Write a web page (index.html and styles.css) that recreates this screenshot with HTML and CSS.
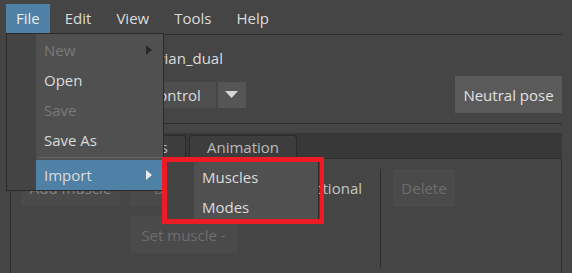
FILE: index.html
```html
<!DOCTYPE html>
<html lang="en">
<head>
    <meta charset="UTF-8">
    <title>Muscle rig editor</title>
    <link rel="stylesheet" href="styles.css">
</head>
<body>

    <nav class="menubar">
        <span class="menubar-item active">File</span>
        <span class="menubar-item">Edit</span>
        <span class="menubar-item">View</span>
        <span class="menubar-item">Tools</span>
        <span class="menubar-item">Help</span>
    </nav>

    <main class="window">
        <section class="model-bar">
            <div class="model-name">Model: avian_dual</div>
            <div class="model-controls">
                <div class="combo">
                    <span class="combo-value">Muscle control</span>
                    <span class="combo-arrow">
                        <svg width="13" height="7" viewBox="0 0 13 7"><polygon points="0,0 13,0 6.5,7" fill="#d6d6d6"/></svg>
                    </span>
                </div>
                <button class="btn btn-pose">Neutral pose</button>
            </div>
        </section>

        <section class="tabs">
            <div class="tab-bar">
                <span class="tab selected">Pose</span>
                <span class="tab">Muscles</span>
                <span class="tab">Animation</span>
            </div>
            <div class="tab-panel">
                <div class="muscle-grid">
                    <button class="btn btn-add">Add muscle</button>
                    <button class="btn" disabled>Deselect</button>
                    <span class="check-label">Bidirectional</span>
                    <button class="btn btn-set" disabled>Set muscle -</button>
                </div>
                <div class="vsep"></div>
                <button class="btn btn-delete" disabled>Delete</button>
            </div>
        </section>
    </main>

    <div class="popup file-menu">
        <div class="menu-item disabled">New <span class="arrow dim"></span></div>
        <div class="menu-item">Open</div>
        <div class="menu-item disabled">Save</div>
        <div class="menu-item">Save As</div>
        <div class="menu-sep"></div>
        <div class="menu-item active">Import <span class="arrow"></span></div>
    </div>

    <div class="popup import-menu">
        <div class="menu-item">Muscles</div>
        <div class="menu-item">Modes</div>
    </div>

    <div class="callout"></div>

</body>
</html>
```

FILE: styles.css
```css
:root {
    --bg: #454545;
    --menu-bg: #505050;
    --menu-gutter: #444444;
    --accent: #4f80a5;
    --text: #dcdcdc;
    --text-dim: #7a7a7a;
    --line: #2e2e2e;
}

* {
    margin: 0;
    padding: 0;
    box-sizing: border-box;
}

body {
    position: relative;
    width: 572px;
    height: 273px;
    overflow: hidden;
    background-color: var(--bg);
    font-family: "Open Sans", sans-serif;
    font-size: 15px;
    color: var(--text);
}

/* menu bar */
.menubar {
    display: flex;
    gap: 5px;
    height: 34px;
    padding: 4px 0 0 6px;
}

.menubar-item {
    height: 29px;
    line-height: 29px;
    padding: 0 10px;
}

.menubar-item.active {
    background-color: var(--accent);
    color: #ececec;
}

.window {
    margin: 0 10px;
}

/* model row */
.model-bar {
    border-top: 1px solid var(--line);
    border-bottom: 1px solid var(--line);
    padding: 13px 0 10px;
}

.model-name {
    line-height: 20px;
    padding-left: 87px;
}

.model-controls {
    display: flex;
    align-items: center;
    height: 37px;
    margin-top: 8px;
}

.combo {
    display: flex;
    gap: 2px;
    margin-left: 80px;
}

.combo-value {
    height: 26px;
    line-height: 26px;
    padding: 0 15px 0 8px;
    background-color: #4e4e4e;
}

.combo-arrow {
    display: flex;
    align-items: center;
    justify-content: center;
    width: 28px;
    height: 26px;
    background-color: #555555;
}

.btn {
    border: none;
    background-color: #4a4a4a;
    font: inherit;
    color: #6e6e6e;
}

.btn-pose {
    width: 107px;
    height: 37px;
    margin-left: auto;
    background-color: #5a5a5a;
    color: #e0e0e0;
}

/* tabs */
.tab-bar {
    display: flex;
    gap: 3px;
    height: 25px;
    margin-top: 9px;
    padding: 2px 0 0 11px;
    background-color: #383838;
}

.tab {
    height: 23px;
    line-height: 22px;
    padding: 0 17px;
    border: 1px solid #2b2b2b;
    border-bottom: none;
    border-radius: 3px 3px 0 0;
    background-color: #3d3d3d;
    color: #bbbbbb;
}

.tab.selected {
    background-color: var(--bg);
    color: var(--text);
}

.tab-panel {
    display: flex;
    align-items: flex-start;
    height: 115px;
    padding: 10px 10px 0;
    border: 1px solid var(--line);
    border-bottom: none;
}

.muscle-grid {
    display: grid;
    grid-template-columns: 99px 107px 1fr;
    grid-auto-rows: 37px;
    gap: 10px;
    width: 341px;
}

.btn-add {
    color: #858585;
}

.btn-set {
    grid-column: 2;
}

.check-label {
    align-self: center;
    justify-self: end;
    color: #c4c4c4;
}

.vsep {
    width: 1px;
    height: 99px;
    margin: 0 12px 0 18px;
    background-color: #2c2c2c;
}

.btn-delete {
    width: 62px;
    height: 38px;
}

/* popup menus */
.popup {
    position: absolute;
    border: 1px solid #2b2b2b;
    background: linear-gradient(to right, var(--menu-gutter) 29px, var(--menu-bg) 29px);
}

.file-menu {
    left: 6px;
    top: 33px;
    width: 158px;
    padding-top: 1px;
}

.import-menu {
    left: 164px;
    top: 160px;
    width: 155px;
    padding: 1px 0;
}

.menu-item {
    display: flex;
    justify-content: space-between;
    align-items: center;
    height: 30px;
    margin-left: 29px;
    padding: 0 11px 0 8px;
}

.menu-item.disabled {
    color: var(--text-dim);
}

.menu-item.active {
    background-color: var(--accent);
}

.menu-sep {
    margin: 2px 1px 2px 31px;
    border-top: 1px solid #666666;
}

.arrow {
    border-left: 6px solid #ececec;
    border-top: 5px solid transparent;
    border-bottom: 5px solid transparent;
}

.arrow.dim {
    border-left-color: #2a2a2a;
}

/* annotation box */
.callout {
    position: absolute;
    left: 162px;
    top: 157px;
    width: 162px;
    height: 67px;
    border: solid #ed1c24;
    border-width: 5px 4px 5px 5px;
}
```
